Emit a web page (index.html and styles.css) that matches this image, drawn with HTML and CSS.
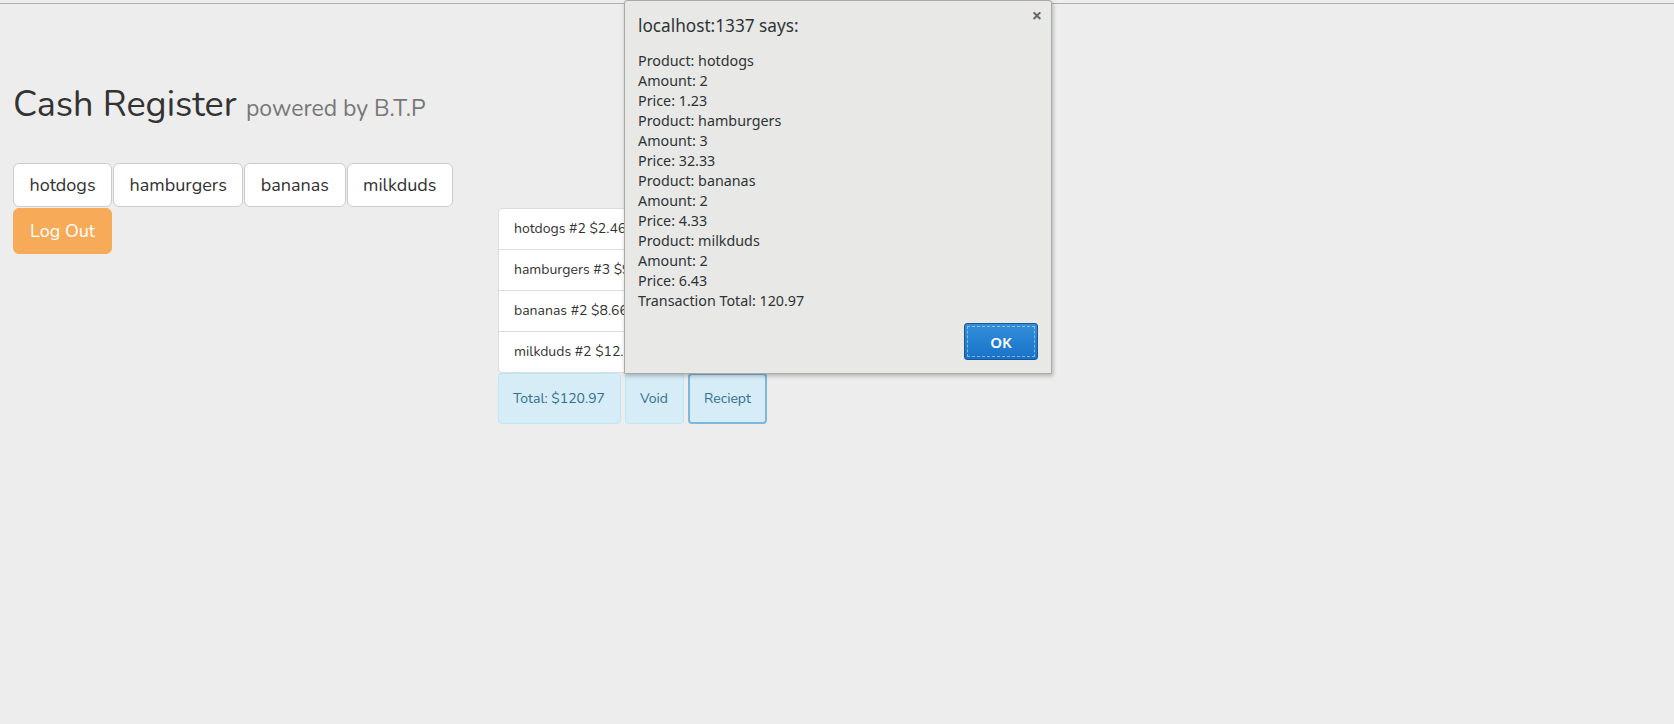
FILE: index.html
```html
<!DOCTYPE html>
<html>
<head>
<meta charset="utf-8">
<title>Cash Register</title>
<link rel="stylesheet" href="styles.css">
</head>
<body>
<div class="page">
  <h1 class="title">Cash Register <small>powered by B.T.P</small></h1>
  <div class="products">
    <button class="btn btn-default">hotdogs</button>
    <button class="btn btn-default">hamburgers</button>
    <button class="btn btn-default">bananas</button>
    <button class="btn btn-default">milkduds</button>
  </div>
  <div class="main">
    <div class="side">
      <button class="btn btn-warning">Log Out</button>
    </div>
    <div class="register">
      <ul class="list-group">
        <li class="list-group-item">hotdogs #2 $2.46</li>
        <li class="list-group-item">hamburgers #3 $96.99</li>
        <li class="list-group-item">bananas #2 $8.66</li>
        <li class="list-group-item">milkduds #2 $12.86</li>
      </ul>
      <div class="actions">
        <div class="info-box total">Total: $120.97</div>
        <div class="info-box void">Void</div>
        <div class="info-box receipt">Reciept</div>
      </div>
    </div>
  </div>
</div>

<div class="dialog">
  <div class="dialog-close">×</div>
  <div class="dialog-title">localhost:1337 says:</div>
  <div class="dialog-body">
    <div>Product: hotdogs</div>
    <div>Amount: 2</div>
    <div>Price: 1.23</div>
    <div>Product: hamburgers</div>
    <div>Amount: 3</div>
    <div>Price: 32.33</div>
    <div>Product: bananas</div>
    <div>Amount: 2</div>
    <div>Price: 4.33</div>
    <div>Product: milkduds</div>
    <div>Amount: 2</div>
    <div>Price: 6.43</div>
    <div>Transaction Total: 120.97</div>
  </div>
  <div class="dialog-footer">
    <button class="dialog-ok">OK</button>
  </div>
</div>
</body>
</html>
```

FILE: styles.css
```css
html, body {
  margin: 0;
  padding: 0;
  background: #ededed;
}
body {
  font-family: "Nunito", "Lato", "Open Sans", sans-serif;
  color: #333;
  height: 724px;
  overflow: hidden;
}
.page {
  margin-top: 3px;
  border-top: 1px solid #b0b0b0;
  padding: 0 13px;
}
.title {
  margin: 0;
  padding-top: 81px;
  font-size: 36px;
  font-weight: 400;
  line-height: 40px;
  color: #333;
}
.title small {
  font-size: 23px;
  color: #777;
}
.products {
  margin-top: 34px;
  display: flex;
  gap: 1px;
}
.btn {
  font-family: inherit;
  font-size: 18px;
  line-height: 24px;
  padding: 9px 15.5px 9px;
  border-radius: 6px;
  border: 1px solid #ccc;
  background: #fff;
  color: #333;
  cursor: pointer;
}
.btn-warning {
  background: #f7aa57;
  border-color: #f7aa57;
  color: #fff;
  padding: 10px 16px;
}
.main {
  display: flex;
  margin-top: 1px;
}
.side {
  width: 485px;
  flex: none;
}
.register {
  width: 320px;
}
.list-group {
  list-style: none;
  margin: 0;
  padding: 0;
  background: #fff;
  border: 1px solid #ddd;
  border-radius: 4px;
}
.list-group-item {
  padding: 10px 15px;
  font-size: 14px;
  line-height: 20px;
  border-top: 1px solid #ddd;
  color: #333;
}
.list-group-item:first-child {
  border-top: none;
}
.actions {
  display: flex;
  gap: 4px;
}
.info-box {
  background: #d6ecf6;
  border: 1px solid #bde7f1;
  border-radius: 4px;
  color: #31708f;
  font-size: 14px;
  height: 49px;
  line-height: 49px;
  padding: 0 14px;
}
.total { width: 93px; }
.void { width: 29px; }
.receipt {
  width: 47px;
  border: 2px solid #7db6df;
  height: 47px;
  line-height: 47px;
}

.dialog {
  position: absolute;
  top: 0;
  left: 624px;
  width: 426px;
  height: 372px;
  background: #e8e8e6;
  border: 1px solid #a9a9a9;
  border-radius: 3px 3px 0 0;
  box-shadow: 1px 2px 4px rgba(0,0,0,0.25);
  font-family: "Noto Sans", "Open Sans", sans-serif;
  color: #2e3436;
}
.dialog-close {
  position: absolute;
  top: 2px;
  right: 9px;
  font-size: 18px;
  font-weight: bold;
  color: #666;
}
.dialog-title {
  padding: 14px 0 0 13px;
  font-size: 17.2px;
  line-height: 22px;
}
.dialog-body {
  padding: 14px 0 0 13px;
  font-size: 14.3px;
  line-height: 20px;
}
.dialog-footer {
  display: flex;
  justify-content: flex-end;
  padding: 12px 13px 0;
}
.dialog-ok {
  width: 74px;
  height: 37px;
  background: linear-gradient(#338ed9, #1872c8);
  border: 1px solid #1c5592;
  border-radius: 3px;
  color: #fff;
  font-family: inherit;
  font-weight: 600;
  font-size: 15px;
  outline: 1px dashed rgba(255,255,255,0.45);
  outline-offset: -4px;
}
```
